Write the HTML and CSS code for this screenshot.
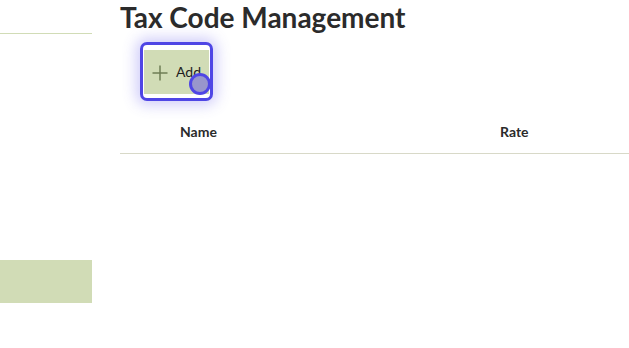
FILE: index.html
```html
<!DOCTYPE html>
<html>
<head>
<meta charset="utf-8">
<link rel="stylesheet" href="styles.css">
</head>
<body>
<div class="app">
  <aside class="sidebar">
    <div class="side-top"></div>
    <div class="side-spacer"></div>
    <div class="side-active"></div>
  </aside>
  <main class="main">
    <h1 class="title">Tax Code Management</h1>
    <div class="toolbar">
      <div class="focus-ring">
        <button class="add-btn">
          <svg class="plus" width="16" height="16" viewBox="0 0 16 16"><path d="M8 0.5V15.5M0.5 8H15.5" stroke="#6f7d55" stroke-width="1.5" fill="none"/></svg>
          <span class="add-label">Add</span>
        </button>
        <span class="cursor"></span>
      </div>
    </div>
    <div class="thead">
      <div class="th th-name">Name</div>
      <div class="th th-rate">Rate</div>
    </div>
  </main>
</div>
</body>
</html>
```
FILE: styles.css
```css
html, body {
  margin: 0;
  padding: 0;
  background: #ffffff;
  font-family: Lato, "Open Sans", sans-serif;
  color: #2b2b2b;
}
.app {
  display: flex;
  width: 629px;
  height: 348px;
  overflow: hidden;
}
.sidebar {
  width: 92px;
  flex: none;
  display: flex;
  flex-direction: column;
}
.side-top {
  height: 33px;
  border-bottom: 1px solid #d1dcb6;
}
.side-spacer {
  height: 226px;
}
.side-active {
  height: 43px;
  background: #d1dcb6;
}
.main {
  flex: 1;
  margin-left: 28px;
  min-width: 0;
}
.title {
  margin: 0;
  padding-top: 1px;
  font-size: 28px;
  line-height: 33px;
  font-weight: 700;
  color: #2b2b2b;
}
.toolbar {
  padding-top: 8px;
  padding-left: 20px;
  height: 59px;
}
.focus-ring {
  position: relative;
  display: inline-flex;
  box-sizing: border-box;
  width: 73px;
  height: 59px;
  border: 3px solid #4f46e5;
  border-radius: 7px;
  padding: 5px 1px 2px 1px;
  background: #ffffff;
  box-shadow: 0 0 14px 4px rgba(99, 91, 235, 0.3);
}
.add-btn {
  display: flex;
  align-items: center;
  width: 66px;
  height: 44px;
  border: none;
  margin: 0;
  padding: 0 0 0 8px;
  background: #d1dcb6;
  font-family: Lato, sans-serif;
  font-size: 14px;
  color: #1e1e1e;
  box-sizing: border-box;
}
.plus {
  display: block;
  margin-top: 1px;
}
.add-label {
  margin-left: 8px;
  line-height: 16px;
}
.cursor {
  position: absolute;
  left: 46px;
  top: 28px;
  width: 16px;
  height: 16px;
  border-radius: 50%;
  background: #9896cc;
  border: 3px solid #4f46e5;
}
.thead {
  display: flex;
  margin-top: 8px;
  height: 44px;
  align-items: center;
  border-bottom: 1px solid #d8d9c8;
  font-size: 14px;
  font-weight: 700;
  color: #2b2b2b;
}
.th-name {
  margin-left: 60px;
  width: 320px;
}
.th-rate {
  margin-left: 0;
}
```
